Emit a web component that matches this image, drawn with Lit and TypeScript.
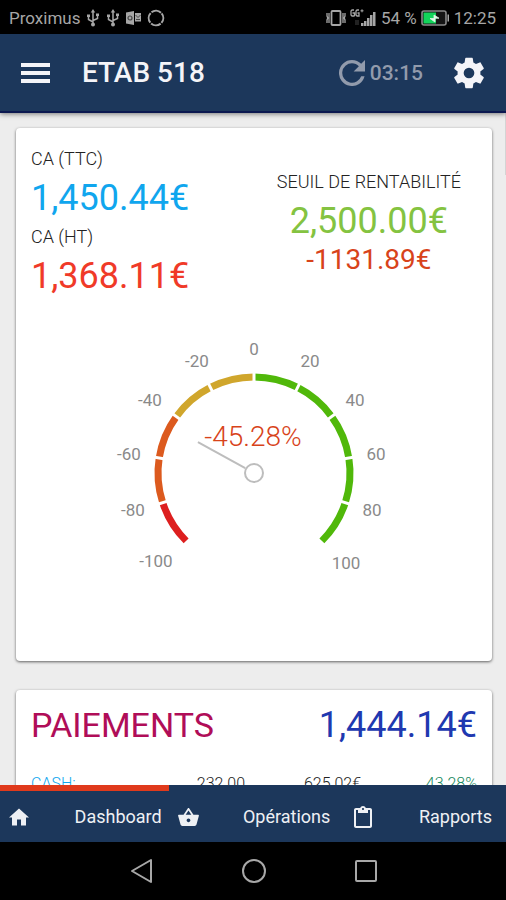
import { LitElement, html, svg, css } from "lit";
import { customElement } from "lit/decorators.js";

const CX = 146;
const CY = 140;
const DEG_PER_UNIT = 135 / 100;

function polar(radius: number, value: number) {
  const a = (value * DEG_PER_UNIT * Math.PI) / 180;
  return { x: CX + radius * Math.sin(a), y: CY - radius * Math.cos(a) };
}

@customElement("percent-gauge")
export class PercentGauge extends LitElement {
  static properties = { value: { type: Number } };
  declare value: number;

  static styles = css`
    :host { display: block; }
    .dial { display: block; width: 292px; height: 250px; margin: 0 auto; }
    .tick { font: 400 17px Roboto, sans-serif; fill: #8a8a8a; text-anchor: middle; }
    .reading { font: 300 28px Roboto, sans-serif; fill: #d8431a; text-anchor: middle; }
  `;

  private color(from: number) {
    if (from < -80) return "#dd1f1f";
    if (from < -40) return "#dc5a1e";
    if (from < 0) return "#d0a62c";
    return "#50b80a";
  }

  private arc(from: number) {
    const r = 96;
    const to = from + 20;
    const a = polar(r, from);
    const b = polar(r, to);
    return svg`<path d="M${a.x} ${a.y}A${r} ${r} 0 0 1 ${b.x} ${b.y}" fill="none" stroke=${this.color(from)} stroke-width="7"></path>`;
  }

  private gap(at: number) {
    const a = polar(90, at);
    const b = polar(102, at);
    return svg`<line x1=${a.x} y1=${a.y} x2=${b.x} y2=${b.y} stroke="#fff" stroke-width="3"></line>`;
  }

  render() {
    const starts = [-100, -80, -60, -40, -20, 0, 20, 40, 60, 80];
    const labels: [number, number, number][] = [
      [-100, 48, 234], [-80, 25, 183], [-60, 21, 127], [-40, 42, 73], [-20, 89, 34],
      [0, 146, 22], [20, 202, 34], [40, 247, 73], [60, 268, 127], [80, 264, 183], [100, 238, 236],
    ];
    const tip = polar(64, this.value);
    const root = polar(10, this.value);
    return html`
      <svg class="dial" viewBox="0 0 292 250" role="img" aria-label="${this.value}%">
        ${starts.map((s) => this.arc(s))}
        ${starts.slice(1).map((s) => this.gap(s))}
        <line x1=${root.x} y1=${root.y} x2=${tip.x} y2=${tip.y} stroke="#bdbdbd" stroke-width="2"></line>
        <circle cx=${CX} cy=${CY} r="9" fill="#fff" stroke="#bdbdbd" stroke-width="2"></circle>
        ${labels.map(([v, x, y]) => svg`<text class="tick" x=${x} y=${y}>${v}</text>`)}
        <text class="reading" x="145" y="113">${this.value}%</text>
      </svg>
    `;
  }
}

const usb = html`<svg width="14" height="18" viewBox="0 0 14 18" fill="none" stroke="currentColor" stroke-width="1.5">
  <path d="M7 3v12M7 13 2.500 10.500V7M7 11.500l4.500-2V6.500"></path>
  <path d="M7 0 4.800 3.500h4.400zM1 5.500h3v2.500h-3zM10 4.500h3v2.500h-3z" fill="currentColor" stroke="none"></path>
  <circle cx="7" cy="15.500" r="2" fill="currentColor" stroke="none"></circle>
</svg>`;

@customElement("app-root")
export class AppRoot extends LitElement {
  static styles = css`
    :host {
      display: flex;
      flex-direction: column;
      height: 100vh;
      overflow: hidden;
      background: #ededed;
      font-family: Roboto, sans-serif;
      color: #222;
    }
    svg { display: block; flex: none; }
    button { border: 0; padding: 0; background: none; color: inherit; font: inherit; cursor: pointer; }
    .status {
      display: flex;
      align-items: center;
      justify-content: space-between;
      box-sizing: border-box;
      height: 34px;
      padding: 2px 10px 0 9px;
      background: #000;
      color: #a6a6a6;
      font-size: 17px;
      flex: none;
    }
    .group { display: flex; align-items: center; gap: 6px; }
    .right { gap: 4px; }
    .bar {
      display: flex;
      align-items: center;
      box-sizing: border-box;
      height: 79px;
      padding: 0 21px;
      background: #1c375b;
      border-bottom: 2px solid #0b1850;
      box-shadow: 0 1px 5px rgba(0, 0, 0, 0.5);
      color: #f4f4f8;
      flex: none;
      z-index: 1;
    }
    .title { margin: 0 auto 0 32px; font-size: 28px; line-height: 32px; font-weight: 500; }
    .refresh { display: flex; align-items: center; gap: 5px; margin-right: 30px; color: #929bac; font-size: 21px; font-weight: 500; }
    .content {
      position: relative;
      flex: 1;
      min-height: 0;
      overflow: hidden;
      padding: 15px 14px 0 16px;
      display: flex;
      flex-direction: column;
      gap: 29px;
    }
    .content::after {
      content: "";
      position: absolute;
      top: 0;
      right: 0;
      width: 1px;
      height: 62px;
      background: #d4d4d4;
    }
    .card {
      box-sizing: border-box;
      flex: none;
      padding: 16px 15px;
      background: #fff;
      border-radius: 4px;
      box-shadow: 0 1px 3px rgba(0, 0, 0, 0.6);
    }
    .summary { padding: 15px 15px 78px; }
    .figures { display: flex; justify-content: space-between; align-items: center; margin-bottom: 34px; }
    .label { margin: 0; font-size: 18px; line-height: 32px; font-weight: 300; }
    .amount { margin: 0; font-size: 36px; line-height: 46px; font-weight: 400; }
    .target { text-align: center; padding-right: 16px; }
    .delta { margin: 0; font-size: 28px; line-height: 32px; color: #d8431a; }
    .blue { color: #10a6ee; }
    .red { color: #f03a28; }
    .green { color: #84c341; }
    .indigo { color: #2038b0; }
    .payments-head { display: flex; justify-content: space-between; align-items: center; }
    .payments-title { margin: 0; font-size: 34px; line-height: 38px; font-weight: 400; color: #b00d58; }
    .payments-total { margin: 0; font-size: 36px; line-height: 38px; }
    .lines { width: 100%; margin-top: 30px; border-collapse: collapse; table-layout: fixed; font-size: 16px; line-height: 20px; font-weight: 300; }
    .lines th, .lines td { padding: 0; font-weight: 300; text-align: right; }
    .lines th { width: 22%; text-align: left; color: #10a6ee; }
    .lines .pct { color: #15875c; }
    .tabs {
      display: grid;
      grid-template-columns: repeat(3, 1fr);
      height: 57px;
      background: #1c375b;
      color: #eef0f4;
      font-size: 18px;
      flex: none;
    }
    .tab {
      display: flex;
      align-items: center;
      justify-content: space-between;
      box-sizing: border-box;
      border-top: 6px solid transparent;
      padding: 0 7px 0 9px;
      color: inherit;
      text-decoration: none;
    }
    .active { border-top-color: #e03a1c; }
    .last { padding: 0 14px 0 16px; }
    .system {
      display: flex;
      align-items: center;
      justify-content: center;
      gap: 88px;
      height: 58px;
      background: #000;
      color: #a8a8a8;
      flex: none;
    }
  `;

  render() {
    return html`
      <div class="status">
        <div class="group">
          <span>Proximus</span>
          ${usb} ${usb}
          <svg width="15" height="14" viewBox="0 0 15 14" fill="#a6a6a6">
            <path d="M0 1.500 8 0v14l-8-1.500z"></path>
            <path d="M9 2h6v8.500H9z"></path>
            <path d="m9.500 4 2.500 2.500L14.500 4M10 8.500h4" stroke="#444" fill="none"></path>
            <circle cx="4" cy="7" r="2" fill="none" stroke="#444" stroke-width="1.200"></circle>
          </svg>
          <svg width="18" height="18" viewBox="0 0 18 18" fill="none" stroke="#a6a6a6" stroke-width="2">
            <circle cx="9" cy="9" r="7.300" stroke-dasharray="10.270 1.200" transform="rotate(-40 9 9)"></circle>
          </svg>
        </div>
        <div class="group right">
          <svg width="20" height="16" viewBox="0 0 20 16" fill="none" stroke="#a6a6a6" stroke-width="1.800">
            <rect x="5.500" y="1" width="9" height="14" rx="1"></rect>
            <path d="M3 3v10M1 3v3l.8 2-.8 2v3M17 3v10M19 3v3l-.8 2 .8 2v3" stroke-width="1.300"></path>
          </svg>
          <svg width="27" height="18" viewBox="0 0 27 18" fill="#a6a6a6">
            <path d="M4 1H2L1 2v4l1 1h2l.5-.6V4H2.500M9 1H7L6 2v4l1 1h2V4H7.500" fill="none" stroke="#a6a6a6" stroke-width="1.300"></path>
            <path d="M10.500 1.800h3M12 .3v3" stroke="#a6a6a6"></path>
            <path d="M11 14h2.500v3H11zM14 12h2.500v5H14zM17 9h2.500v8H17zM20 6h2.500v11H20zM23 3h2.500v14H23z"></path>
            <path d="M6 11v5M8 11v5" stroke="#444"></path>
          </svg>
          <span>54 %</span>
          <svg width="29" height="16" viewBox="0 0 29 16">
            <rect x="1" y="1" width="24" height="14" rx="2" fill="#151515" stroke="#8a8a8a" stroke-width="1.600"></rect>
            <path d="M2.500 2.500H15v11H2.500z" fill="#12d45a"></path>
            <path d="M26.500 4.500h1.500v7h-1.500z" fill="#a6a6a6"></path>
            <path d="M9 8.500h4V5l5 3.200h-4V12z" fill="#e0f8e8" stroke="#e0f8e8" stroke-width=".8"></path>
          </svg>
          <span>12:25</span>
        </div>
      </div>

      <header class="bar">
        <button aria-label="Menu">
          <svg width="29" height="20" viewBox="0 0 29 20" fill="currentColor">
            <path d="M0 0h29v4H0zM0 8h29v4H0zM0 16h29v4H0z"></path>
          </svg>
        </button>
        <h1 class="title">ETAB 518</h1>
        <button class="refresh">
          <svg width="26" height="26" viewBox="4 4 16 16" fill="currentColor">
            <path d="M17.650 6.350A7.958 7.958 0 0 0 12 4a8 8 0 1 0 7.730 10h-2.080A6 6 0 1 1 12 6c1.660 0 3.140.69 4.220 1.780L13 11h7V4l-2.350 2.350z"></path>
          </svg>
          <span>03:15</span>
        </button>
        <button aria-label="Paramètres">
          <svg width="32" height="32" viewBox="1.500 1.500 21 21" fill="currentColor">
            <path d="M19.430 12.980c.04-.32.07-.64.07-.98s-.03-.66-.07-.98l2.110-1.650c.19-.15.24-.42.12-.64l-2-3.460c-.12-.22-.39-.3-.61-.22l-2.490 1c-.52-.4-1.080-.73-1.690-.98l-.38-2.650A.488.488 0 0 0 14 2h-4c-.25 0-.46.18-.49.42l-.38 2.650c-.61.25-1.170.59-1.690.98l-2.490-1c-.23-.09-.49 0-.61.22l-2 3.460c-.13.22-.07.49.12.64l2.110 1.650c-.04.32-.07.65-.07.98s.03.66.07.98l-2.110 1.650c-.19.15-.24.42-.12.64l2 3.460c.12.22.39.3.61.22l2.490-1c.52.4 1.080.73 1.690.98l.38 2.650c.03.24.24.42.49.42h4c.25 0 .46-.18.49-.42l.38-2.650c.61-.25 1.170-.59 1.690-.98l2.490 1c.23.09.49 0 .61-.22l2-3.460c.12-.22.07-.49-.12-.64l-2.110-1.650zM12 15.500a3.500 3.500 0 1 1 0-7 3.500 3.500 0 0 1 0 7z"></path>
          </svg>
        </button>
      </header>

      <main class="content">
        <section class="card summary">
          <div class="figures">
            <div>
              <p class="label">CA (TTC)</p>
              <p class="amount blue">1,450.44€</p>
              <p class="label">CA (HT)</p>
              <p class="amount red">1,368.11€</p>
            </div>
            <div class="target">
              <p class="label">SEUIL DE RENTABILITÉ</p>
              <p class="amount green">2,500.00€</p>
              <p class="delta">-1131.89€</p>
            </div>
          </div>
          <percent-gauge .value=${-45.28}></percent-gauge>
        </section>

        <section class="card">
          <div class="payments-head">
            <h2 class="payments-title">PAIEMENTS</h2>
            <p class="payments-total indigo">1,444.14€</p>
          </div>
          <table class="lines">
            <tr>
              <th scope="row">CASH:</th>
              <td>232.00</td>
              <td>625.02€</td>
              <td class="pct">43.28%</td>
            </tr>
          </table>
        </section>
      </main>

      <nav class="tabs">
        <a class="tab active" href="#dashboard">
          <svg width="20" height="18" viewBox="2 3 20 17" fill="currentColor"><path d="M10 20v-6h4v6h5v-8h3L12 3 2 12h3v8z"></path></svg>
          <span>Dashboard</span>
        </a>
        <a class="tab" href="#operations">
          <svg width="21" height="18" viewBox="1 2 22 19" fill="currentColor">
            <path d="m17.210 9-4.380-6.560a.993.993 0 0 0-1.660.01L6.790 9H2c-.55 0-1 .45-1 1 0 .09.010.18.040.27l2.540 9.270c.23.840 1 1.460 1.920 1.460h13c.92 0 1.690-.62 1.930-1.460l2.540-9.270L23 10c0-.55-.45-1-1-1h-4.790zM9 9l3-4.400L15 9H9zm3 8c-1.100 0-2-.9-2-2s.9-2 2-2 2 .9 2 2-.9 2-2 2z"></path>
          </svg>
          <span>Opérations</span>
        </a>
        <a class="tab last" href="#rapports">
          <svg width="20" height="22" viewBox="2 0 20 22" fill="currentColor">
            <path d="M19 2h-4.180C14.400.84 13.300 0 12 0S9.600.84 9.180 2H5c-1.100 0-2 .9-2 2v16c0 1.100.9 2 2 2h14c1.100 0 2-.9 2-2V4c0-1.100-.9-2-2-2zm-7 0c.55 0 1 .45 1 1s-.45 1-1 1-1-.45-1-1 .45-1 1-1zm7 18H5V4h2v3h10V4h2v16z"></path>
          </svg>
          <span>Rapports</span>
        </a>
      </nav>

      <div class="system">
        <button aria-label="Retour">
          <svg width="24" height="26" viewBox="0 0 24 26" fill="none" stroke="currentColor" stroke-width="2" stroke-linejoin="round"><path d="M22 2v22L3 13z"></path></svg>
        </button>
        <button aria-label="Accueil">
          <svg width="26" height="26" viewBox="0 0 26 26" fill="none" stroke="currentColor" stroke-width="2"><circle cx="13" cy="13" r="11"></circle></svg>
        </button>
        <button aria-label="Applications récentes">
          <svg width="22" height="22" viewBox="0 0 22 22" fill="none" stroke="currentColor" stroke-width="2"><rect x="1" y="1" width="20" height="20" rx="1"></rect></svg>
        </button>
      </div>
    `;
  }
}
